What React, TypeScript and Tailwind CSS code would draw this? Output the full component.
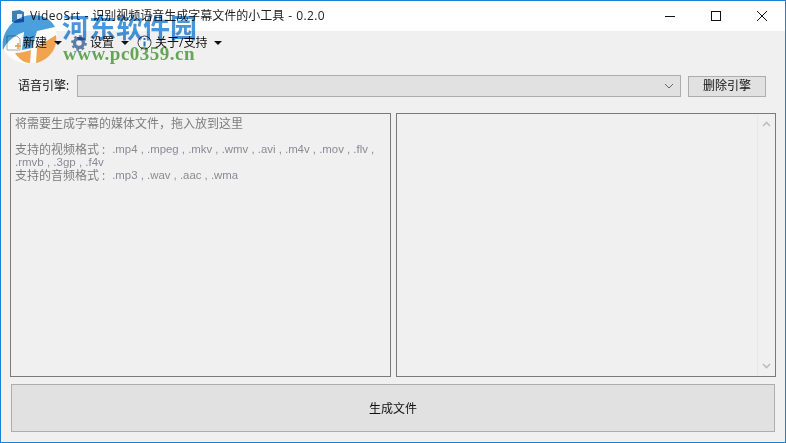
const uiFont = { fontFamily: '"Open Sans", "Noto Sans CJK SC", sans-serif' };
const latinFont = { fontFamily: '"Liberation Sans", "Noto Sans CJK SC", sans-serif' };

function Caret() {
  return <span className="w-0 h-0 border-x-[4px] border-x-transparent border-t-[4px] border-t-[#111]" />;
}

function MenuItem({ icon, label, className }: { icon: React.ReactNode; label: string; className: string }) {
  return (
    <div className={`flex items-center ${className}`}>
      {icon}
      <span className="text-[12px] text-[#111] leading-none">{label}</span>
      <span className="ml-[7px] flex"><Caret /></span>
    </div>
  );
}

function Formats({ label, items }: { label: string; items: string }) {
  return (
    <div className="h-[13px] flex items-center whitespace-nowrap text-[#7d7d7d]">
      {label}
      <span className="ml-[3px] mr-[7px]">:</span>
      <span className="text-[11.4px] text-[#8a8a96]" style={latinFont}>{items}</span>
    </div>
  );
}

function Watermark() {
  return (
    <div className="absolute left-0 top-0 w-[200px] h-[64px] pointer-events-none mix-blend-multiply">
      <svg className="absolute left-0 top-[12px]" width="58" height="52" viewBox="0 0 58 52">
        <path
          d="M2 37C-1 17 15 2 32 2c10 0 18 4 22 12l-18 4-5 17-10 2 2-18C14 22 6 28 2 37Z"
          fill="#4a9fdc"
        />
        <path d="M14 40c6 0 12-2 16-3l-1 13c-6 0-11-4-15-10Z" fill="#f4a551" />
        <path d="M36 34l19-12c2 12-5 24-20 28Z" fill="#f4a551" />
      </svg>
      <span
        className="absolute left-[61px] top-[10px] text-[27px] leading-[32px] font-bold text-[#4a96da] whitespace-nowrap"
        style={{ fontFamily: '"Noto Sans CJK SC", sans-serif' }}
      >
        河东软件园
      </span>
      <span
        className="absolute left-[62px] top-[42px] text-[19px] leading-[22px] font-bold text-[#6cb05b] tracking-[0.5px] whitespace-nowrap"
        style={{ fontFamily: '"Liberation Serif", serif' }}
      >
        www.pc0359.cn
      </span>
    </div>
  );
}

export default function App() {
  return (
    <div className="relative isolate w-[786px] h-[443px] flex flex-col border border-[#1483d8] bg-[#f0f0f0] overflow-hidden" style={uiFont}>
      {/* pale disc behind the watermark logo */}
      <div className="absolute -z-10 left-0 top-[12px] w-[56px] h-[50px] rounded-full bg-white/80" />

      {/* title bar */}
      <div className="h-[30px] shrink-0 bg-white flex items-center pl-[10px]">
        <svg width="15" height="15" viewBox="0 0 15 15" className="mr-[4px]">
          <path d="M1 2l8-1 4 2v10l-8 1-4-1Z" fill="#3d7fb5" />
          <rect x="6" y="5" width="5" height="5" fill="#d4e6f4" />
        </svg>
        <span className="text-[12px] text-[#222] whitespace-nowrap">
          <span className="tracking-[0.4px]">VideoSrt</span>
          <span className="mx-[4px]">-</span>
          识别视频语音生成字幕文件的小工具
          <span className="mx-[4px]">-</span>
          <span className="tracking-[0.4px]">0.2.0</span>
        </span>
        <div className="ml-auto flex h-full">
          <div className="w-[46px] flex items-center justify-center">
            <svg width="10" height="10" viewBox="0 0 10 10"><path d="M0 5.5h10" stroke="#111" /></svg>
          </div>
          <div className="w-[46px] flex items-center justify-center">
            <svg width="10" height="10" viewBox="0 0 10 10"><rect x="0.5" y="0.5" width="9" height="9" fill="none" stroke="#111" /></svg>
          </div>
          <div className="w-[46px] flex items-center justify-center">
            <svg width="10" height="10" viewBox="0 0 10 10"><path d="M0 0l10 10M10 0L0 10" stroke="#111" /></svg>
          </div>
        </div>
      </div>

      {/* menu */}
      <div className="h-[23px] shrink-0 flex items-center pl-[5px]">
        <MenuItem
          className="w-[65px]"
          label="新建"
          icon={
            <svg width="17" height="16" viewBox="0 0 17 16">
              <path d="M1 1h10l3 3v11H1Z" fill="#fff" stroke="#aaa" />
              <path d="M12 8v6M9 11h6" stroke="#d9a05a" strokeWidth="1.5" />
            </svg>
          }
        />
        <MenuItem
          className="w-[66px]"
          label="设置"
          icon={
            <svg width="16" height="16" viewBox="0 0 16 16" className="mr-[3px]">
              <circle cx="8" cy="8" r="4.5" fill="none" stroke="#5f7ca8" strokeWidth="3.4" />
              <circle cx="8" cy="8" r="6.8" fill="none" stroke="#5f7ca8" strokeWidth="2.2" strokeDasharray="2.6 2.74" />
            </svg>
          }
        />
        <MenuItem
          className="w-[100px]"
          label="关于/支持"
          icon={
            <svg width="15" height="15" viewBox="0 0 15 15" className="mr-[3px]">
              <circle cx="7.5" cy="7.5" r="6.5" fill="#f4f4f4" stroke="#444" />
              <path d="M7.5 6.5v5" stroke="#2f6fc0" strokeWidth="2" />
              <path d="M7.5 3v2" stroke="#2f6fc0" strokeWidth="2" />
            </svg>
          }
        />
      </div>

      {/* engine row */}
      <div className="h-[22px] mt-[21px] shrink-0 flex items-center pl-[17px] pr-[19px]">
        <span className="text-[12px] text-[#111] w-[59px] whitespace-nowrap">语音引擎:</span>
        <div className="w-[604px] h-[22px] bg-[#e1e1e1] border border-[#adadad] flex items-center justify-end pr-[6px]">
          <svg width="10" height="6" viewBox="0 0 10 6"><path d="M1 1l4 4 4-4" fill="none" stroke="#666" /></svg>
        </div>
        <button className="ml-[7px] w-[78px] h-[21px] bg-[#e1e1e1] border border-[#adadad] text-[12px] text-[#111] leading-none">删除引擎</button>
      </div>

      {/* panels */}
      <div className="mt-[16px] h-[264px] shrink-0 flex px-[9px] gap-[5px]">
        <div className="w-[381px] border border-[#7a7a7a] px-[4px] py-[2px] text-[12px] leading-[13px]">
          <p className="leading-[16px] text-[#7d7d7d]">将需要生成字幕的媒体文件，拖入放到这里</p>
          <div className="mt-[11px]">
            <Formats label="支持的视频格式" items=".mp4 , .mpeg , .mkv , .wmv , .avi , .m4v , .mov , .flv ," />
            <div className="h-[13px] flex items-center text-[11.5px] text-[#8a8a96]" style={latinFont}>.rmvb , .3gp , .f4v</div>
            <Formats label="支持的音频格式" items=".mp3 , .wav , .aac , .wma" />
          </div>
        </div>
        <div className="w-[380px] border border-[#7a7a7a] flex justify-end">
          <div className="w-[18px] border-l border-[#e8e8e8] flex flex-col items-center justify-between py-[7px]">
            <svg width="9" height="6" viewBox="0 0 9 6"><path d="M1 5l3.5-3.5L8 5" fill="none" stroke="#bdbdbd" strokeWidth="1.6" /></svg>
            <svg width="9" height="6" viewBox="0 0 9 6"><path d="M1 1l3.5 3.5L8 1" fill="none" stroke="#bdbdbd" strokeWidth="1.6" /></svg>
          </div>
        </div>
      </div>

      {/* generate */}
      <div className="mt-[7px] px-[10px]">
        <button className="w-[764px] h-[48px] pt-[2px] bg-[#e1e1e1] border border-[#adadad] text-[12px] text-[#111]">生成文件</button>
      </div>

      <Watermark />
    </div>
  );
}
